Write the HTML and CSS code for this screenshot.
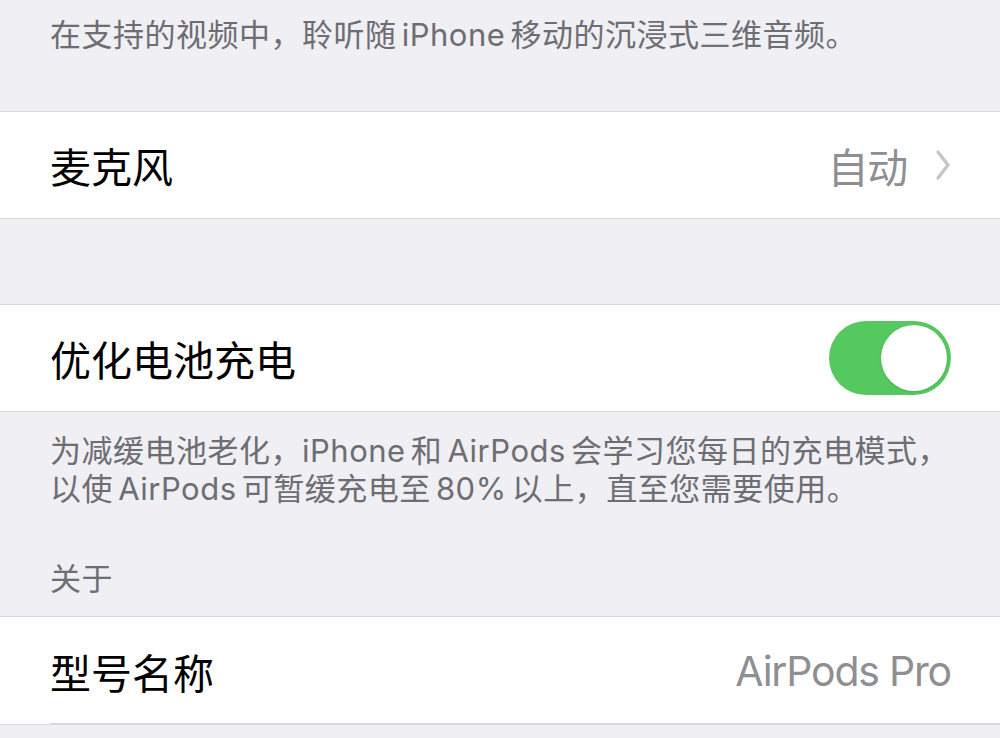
FILE: index.html
```html
<!DOCTYPE html>
<html lang="zh-CN">

<head>
  <meta charset="UTF-8">
  <meta name="viewport" content="width=device-width, initial-scale=1.0">
  <title>AirPods Pro</title>

  <link rel="stylesheet" href="styles.css">
</head>

<body>

  <div class="settings">
    <p class="note note-top">在支持的视频中，聆听随 iPhone 移动的沉浸式三维音频。</p>

    <!-- 麦克风 -->
    <div class="group">
      <div class="row">
        <span class="row-title">麦克风</span>
        <span class="row-value">自动</span>
        <svg class="chevron" width="16" height="32" viewBox="0 0 16 32">
          <path d="M3 3 L13 16 L3 29" fill="none" stroke="#c4c4c8" stroke-width="3.2" stroke-linecap="round" stroke-linejoin="round" />
        </svg>
      </div>
    </div>

    <!-- 优化电池充电 -->
    <div class="group group-spaced">
      <div class="row">
        <span class="row-title">优化电池充电</span>
        <button class="switch" aria-pressed="true"><span class="knob"></span></button>
      </div>
    </div>
    <p class="note note-footer">为减缓电池老化，iPhone 和 AirPods 会学习您每日的充电模式，<br>以使 AirPods 可暂缓充电至 80% 以上，直至您需要使用。</p>

    <p class="note note-header">关于</p>
    <div class="group">
      <div class="row row-divided">
        <span class="row-title">型号名称</span>
        <span class="row-value">AirPods Pro</span>
      </div>
    </div>
  </div>

</body>

</html>
```

FILE: styles.css
```css
body {
  margin: 0;
  background: #efeff4;
  font-family: "Inter", "Noto Sans CJK SC", sans-serif;
  color: #000;
}

.settings {
  width: 1000px;
}

/* 灰色說明文字 */
.note {
  margin: 0;
  padding: 0 50px;
  font-size: 31px;
  line-height: 38px;
  letter-spacing: 0.5px;
  word-spacing: -4px;
  color: #6d6d72;
  white-space: nowrap;
}

.note-top {
  height: 111px;
  padding-top: 16px;
  box-sizing: border-box;
}

.note-footer {
  padding-top: 20px;
}

.note-header {
  padding-top: 52px;
  padding-bottom: 18px;
}

/* 白色分組 */
.group {
  background: #fff;
  border-top: 1px solid #d8d8dc;
  border-bottom: 1px solid #d8d8dc;
}

.group-spaced {
  margin-top: 85px;
}

.row {
  position: relative;
  display: flex;
  align-items: center;
  height: 106px;
  padding: 0 49px 0 50px;
  font-size: 41px;
}

.row-title {
  flex: 1;
}

.row-value {
  color: #8e8e93;
  letter-spacing: -1.2px;
}

.chevron {
  margin-left: 28px;
}

.row-divided {
  height: 107px;
}

.row-divided::after {
  content: "";
  position: absolute;
  left: 50px;
  right: 0;
  bottom: 0;
  height: 1px;
  background: #d8d8dc;
}

/* 開關 */
.switch {
  position: relative;
  width: 122px;
  height: 74px;
  border: 0;
  padding: 0;
  border-radius: 37px;
  background: #56c860;
}

.knob {
  position: absolute;
  right: 4px;
  top: 4px;
  width: 66px;
  height: 66px;
  border-radius: 50%;
  background: #fff;
  box-shadow: 0 1px 3px rgba(0, 0, 0, 0.12);
}
```
